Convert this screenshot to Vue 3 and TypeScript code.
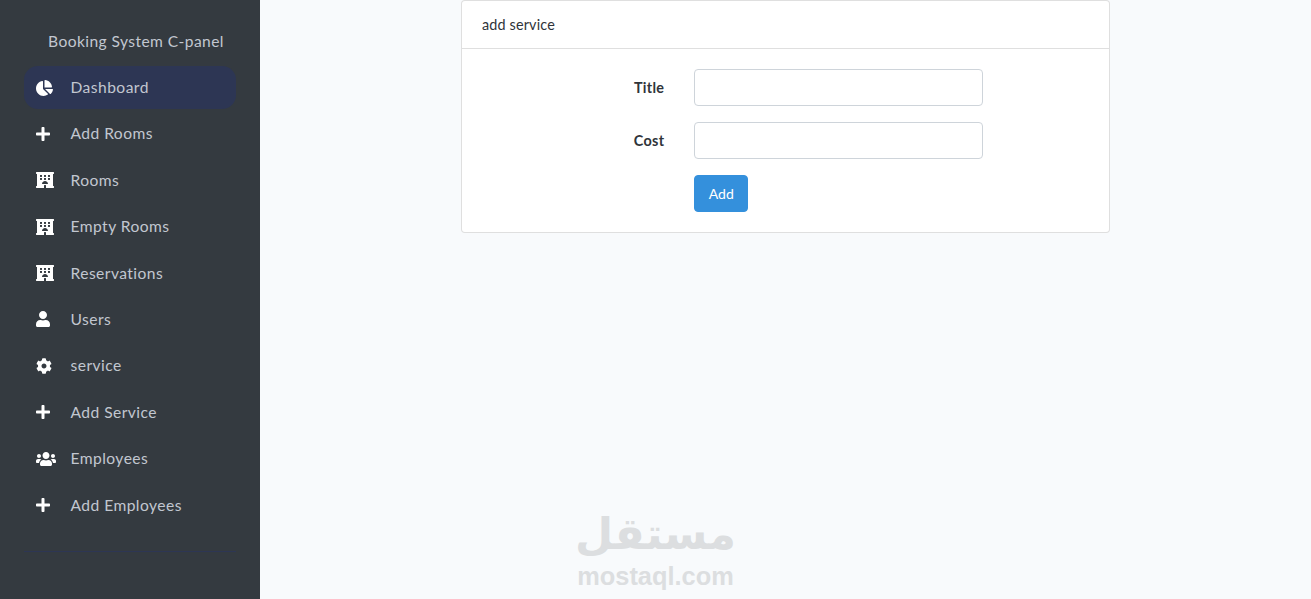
<template>
  <div class="layout">
    <aside class="sidebar">
      <div class="brand">Booking System C-panel</div>
      <ul class="nav">
        <li v-for="item in navItems" :key="item.label" :class="['nav-item', { active: item.active }]">
          <span class="nav-icon">
            <svg :viewBox="icons[item.icon].box" :style="{ width: icons[item.icon].width + 'px' }" class="icon">
              <path :d="icons[item.icon].d" fill="#fff" />
            </svg>
          </span>
          <span>{{ item.label }}</span>
        </li>
      </ul>
      <hr class="divider" />
    </aside>

    <main class="content">
      <section class="card">
        <header class="card-header">add service</header>
        <form class="card-body" @submit.prevent>
          <div class="form-row">
            <label for="title">Title</label>
            <input id="title" type="text" />
          </div>
          <div class="form-row">
            <label for="cost">Cost</label>
            <input id="cost" type="text" />
          </div>
          <div class="form-row last">
            <span></span>
            <div><button type="submit">Add</button></div>
          </div>
        </form>
      </section>
    </main>

    <div class="watermark">
      <div class="wm-logo" dir="rtl" lang="ar">مستقل</div>
      <div class="wm-site">mostaql.com</div>
    </div>
  </div>
</template>

<script setup lang="ts">
type IconName = 'pie' | 'plus' | 'hotel' | 'user' | 'cog' | 'users'

interface NavItem {
  label: string
  icon: IconName
  active?: boolean
}

const icons: Record<IconName, { box: string; width: number; d: string }> = {
  pie: {
    box: '0 0 544 512',
    width: 17,
    d: 'M527.79 288H290.5l158.03 158.03c6.04 6.04 15.98 6.53 22.19.68 38.7-36.46 65.32-85.61 73.13-140.86 1.34-9.46-6.51-17.85-16.06-17.85zm-15.83-64.8C503.72 103.74 408.26 8.28 288.8.04 279.68-.59 272 7.1 272 16.24V240h223.77c9.14 0 16.82-7.68 16.19-16.8zM224 288V50.71c0-9.55-8.39-17.4-17.84-16.06C86.99 51.49-4.1 155.6.14 280.37 4.5 408.51 114.83 513.59 243.03 511.98c50.4-.63 96.97-16.87 135.26-44.03 7.9-5.6 8.42-17.23 1.57-24.08L224 288z',
  },
  plus: {
    box: '0 0 448 512',
    width: 14,
    d: 'M416 208H272V64c0-17.67-14.33-32-32-32h-32c-17.67 0-32 14.33-32 32v144H32c-17.67 0-32 14.33-32 32v32c0 17.67 14.33 32 32 32h144v144c0 17.67 14.33 32 32 32h32c17.67 0 32-14.33 32-32V304h144c17.67 0 32-14.33 32-32v-32c0-17.67-14.33-32-32-32z',
  },
  hotel: {
    box: '0 0 576 512',
    width: 18,
    d: 'M560 64c8.84 0 16-7.16 16-16V16c0-8.84-7.16-16-16-16H16C7.16 0 0 7.16 0 16v32c0 8.84 7.16 16 16 16h16v384H16c-8.84 0-16 7.16-16 16v32c0 8.84 7.16 16 16 16h240v-80c0-8.8 7.2-16 16-16h32c8.8 0 16 7.2 16 16v80h240c8.84 0 16-7.16 16-16v-32c0-8.84-7.16-16-16-16h-16V64h16zM256 108.8c0-6.4 6.4-12.8 12.8-12.8h38.4c6.4 0 12.8 6.4 12.8 12.8v38.4c0 6.4-6.4 12.8-12.8 12.8h-38.4c-6.4 0-12.8-6.4-12.8-12.8v-38.4zm0 96c0-6.4 6.4-12.8 12.8-12.8h38.4c6.4 0 12.8 6.4 12.8 12.8v38.4c0 6.4-6.4 12.8-12.8 12.8h-38.4c-6.4 0-12.8-6.4-12.8-12.8v-38.4zm-128-96c0-6.4 6.4-12.8 12.8-12.8h38.4c6.4 0 12.8 6.4 12.8 12.8v38.4c0 6.4-6.4 12.8-12.8 12.8h-38.4c-6.4 0-12.8-6.4-12.8-12.8v-38.4zM179.2 256h-38.4c-6.4 0-12.8-6.4-12.8-12.8v-38.4c0-6.4 6.4-12.8 12.8-12.8h38.4c6.4 0 12.8 6.4 12.8 12.8v38.4c0 6.4-6.4 12.8-12.8 12.8zM192 384c0-53 43-96 96-96s96 43 96 96H192zm256-140.8c0 6.4-6.4 12.8-12.8 12.8h-38.4c-6.4 0-12.8-6.4-12.8-12.8v-38.4c0-6.4 6.4-12.8 12.8-12.8h38.4c6.4 0 12.8 6.4 12.8 12.8v38.4zm0-96c0 6.4-6.4 12.8-12.8 12.8h-38.4c-6.4 0-12.8-6.4-12.8-12.8v-38.4c0-6.4 6.4-12.8 12.8-12.8h38.4c6.4 0 12.8 6.4 12.8 12.8v38.4z',
  },
  user: {
    box: '0 0 448 512',
    width: 14,
    d: 'M224 256c70.7 0 128-57.3 128-128S294.7 0 224 0 96 57.3 96 128s57.3 128 128 128zm89.6 32h-16.7c-22.2 10.2-46.9 16-72.9 16s-50.6-5.8-72.9-16h-16.7C60.2 288 0 348.2 0 422.4V464c0 26.5 21.5 48 48 48h352c26.5 0 48-21.5 48-48v-41.6c0-74.2-60.2-134.4-134.4-134.4z',
  },
  cog: {
    box: '0 0 512 512',
    width: 16,
    d: 'M487.4 315.7l-42.6-24.6c4.3-23.2 4.3-47 0-70.2l42.6-24.6c4.9-2.8 7.1-8.6 5.5-14-11.1-35.6-30-67.8-54.7-94.6-3.8-4.1-10-5.1-14.8-2.3L380.8 110c-17.9-15.4-38.5-27.3-60.8-35.1V25.8c0-5.6-3.9-10.5-9.4-11.7-36.7-8.2-74.3-7.8-109.2 0-5.5 1.2-9.4 6.1-9.4 11.7V75c-22.2 7.9-42.8 19.8-60.8 35.1L88.7 85.5c-4.9-2.8-11-1.9-14.8 2.3-24.7 26.7-43.6 58.9-54.7 94.6-1.7 5.4.6 11.2 5.5 14L67.3 221c-4.3 23.2-4.3 47 0 70.2l-42.6 24.6c-4.9 2.8-7.1 8.6-5.5 14 11.1 35.6 30 67.8 54.7 94.6 3.8 4.1 10 5.1 14.8 2.3l42.6-24.6c17.9 15.4 38.5 27.3 60.8 35.1v49.2c0 5.6 3.9 10.5 9.4 11.7 36.7 8.2 74.3 7.8 109.2 0 5.5-1.2 9.4-6.1 9.4-11.7v-49.2c22.2-7.9 42.8-19.8 60.8-35.1l42.6 24.6c4.9 2.8 11 1.9 14.8-2.3 24.7-26.7 43.6-58.9 54.7-94.6 1.5-5.5-.7-11.3-5.6-14.1zM256 336c-44.1 0-80-35.9-80-80s35.9-80 80-80 80 35.9 80 80-35.9 80-80 80z',
  },
  users: {
    box: '0 0 640 512',
    width: 20,
    d: 'M96 224c35.3 0 64-28.7 64-64s-28.7-64-64-64-64 28.7-64 64 28.7 64 64 64zm448 0c35.3 0 64-28.7 64-64s-28.7-64-64-64-64 28.7-64 64 28.7 64 64 64zm32 32h-64c-17.6 0-33.5 7.1-45.1 18.6 40.3 22.1 68.9 62 75.1 109.4h66c17.7 0 32-14.3 32-32v-32c0-35.3-28.7-64-64-64zm-256 0c61.9 0 112-50.1 112-112S381.9 32 320 32 208 82.1 208 144s50.1 112 112 112zm76.8 32h-8.3c-20.8 10-43.9 16-68.5 16s-47.6-6-68.5-16h-8.3C179.6 288 128 339.6 128 403.2V432c0 26.5 21.5 48 48 48h288c26.5 0 48-21.5 48-48v-28.8c0-63.6-51.6-115.2-115.2-115.2zm-223.7-13.4C161.5 263.1 145.6 256 128 256H64c-35.3 0-64 28.7-64 64v32c0 17.7 14.3 32 32 32h65.9c6.3-47.4 34.9-87.3 75.2-109.4z',
  },
}

const navItems: NavItem[] = [
  { label: 'Dashboard', icon: 'pie', active: true },
  { label: 'Add Rooms', icon: 'plus' },
  { label: 'Rooms', icon: 'hotel' },
  { label: 'Empty Rooms', icon: 'hotel' },
  { label: 'Reservations', icon: 'hotel' },
  { label: 'Users', icon: 'user' },
  { label: 'service', icon: 'cog' },
  { label: 'Add Service', icon: 'plus' },
  { label: 'Employees', icon: 'users' },
  { label: 'Add Employees', icon: 'plus' },
]
</script>

<style>
html,
body {
  margin: 0;
  background: #f8fafc;
  overflow: hidden;
}
</style>

<style scoped>
.layout {
  display: flex;
  position: relative;
  height: 100vh;
  font-family: Lato, 'Noto Sans', sans-serif;
  font-size: 14.4px;
  line-height: 1.6;
  color: #2f343a;
}

.sidebar {
  width: 260px;
  flex-shrink: 0;
  background: #343a40;
  padding: 29px 24px 0;
  box-sizing: border-box;
}

.brand {
  padding-left: 24px;
  font-size: 15.6px;
  letter-spacing: 0.42px;
  line-height: 24px;
  color: #c2c7d0;
  height: 37px;
  white-space: nowrap;
}

.nav {
  list-style: none;
  margin: 0;
  padding: 0;
}

.nav-item {
  display: flex;
  align-items: center;
  height: 43px;
  margin-bottom: 3.4px;
  padding-left: 12px;
  border-radius: 14px;
  font-size: 15.6px;
  letter-spacing: 0.45px;
  color: #c2c7d0;
}

.nav-item.active {
  background: #2d3654;
}

.nav-icon {
  width: 34.5px;
  flex-shrink: 0;
  display: flex;
  align-items: center;
}

.icon {
  height: 16px;
  display: block;
}

.divider {
  border: 0;
  height: 1px;
  margin: 24px 0 0;
  background: #2d3654;
}

.content {
  flex: 1;
  display: flex;
  justify-content: center;
  align-items: flex-start;
}

.card {
  width: 649px;
  box-sizing: border-box;
  background: #fff;
  border: 1px solid rgba(0, 0, 0, 0.125);
  border-radius: 4px;
}

.card-header {
  padding: 12px 20px;
  border-bottom: 1px solid rgba(0, 0, 0, 0.125);
  letter-spacing: 0.15px;
}

.card-body {
  padding: 20px 5px;
}

.form-row {
  display: grid;
  grid-template-columns: 212.3px 318.5px;
  margin-bottom: 16px;
}

.form-row.last {
  margin-bottom: 0;
}

.form-row label {
  padding: 7px 15px 7px 0;
  text-align: right;
  font-weight: 700;
  letter-spacing: 0.3px;
}

.form-row input {
  margin: 0 15px;
  box-sizing: border-box;
  height: 37px;
  border: 1px solid #ced4da;
  border-radius: 4px;
  background: #fff;
}

.form-row button {
  margin-left: 15px;
  height: 37px;
  width: 54px;
  padding: 1px 0 0;
  border: 1px solid #3490dc;
  border-radius: 4px;
  background: #3490dc;
  color: #fff;
  font: inherit;
  font-size: 14px;
}

.watermark {
  position: absolute;
  left: 577px;
  top: 508px;
  width: 157px;
  text-align: center;
  color: #dcdee0;
  pointer-events: none;
}

.wm-logo {
  font-family: 'DejaVu Sans', sans-serif;
  font-weight: 700;
  font-size: 44px;
  line-height: 52px;
  white-space: nowrap;
  transform: translateX(2px);
}

.wm-site {
  margin-top: 2px;
  font-family: 'Liberation Sans', sans-serif;
  font-weight: 700;
  font-size: 25.4px;
  line-height: 29px;
}
</style>
